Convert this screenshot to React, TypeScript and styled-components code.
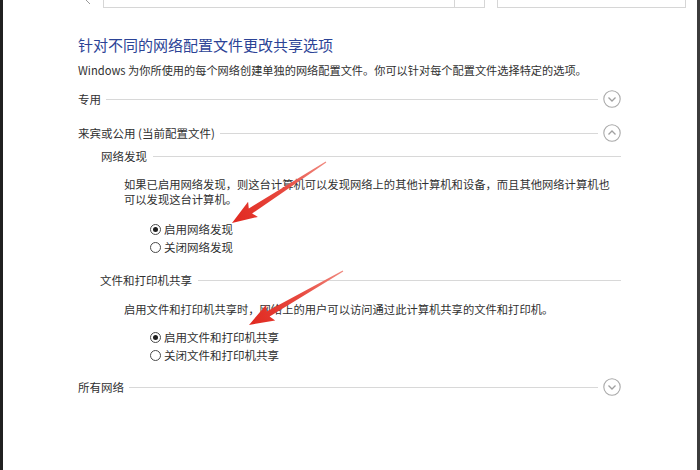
import styled, { createGlobalStyle } from 'styled-components'

const GlobalStyle = createGlobalStyle`
	html, body {
		margin: 0;
		padding: 0;
		background: #fff;
	}
	body {
		font-family: "Noto Sans CJK SC", "Noto Sans", sans-serif;
	}
`

const Frame = styled.div`
	position: relative;
	width: 700px;
	height: 470px;
	box-sizing: border-box;
	border-left: 3px solid #202020;
	border-right: 3px solid #3c3c3c;
	background: #fff;
	overflow: hidden;
	color: #303030;
	font-size: 11.5px;
`

const TopBar = styled.div`
	display: flex;
	align-items: flex-end;
	height: 8px;
	padding-left: 82px;
`

const Crumb = styled.svg`
	width: 6px;
	height: 8px;
	margin-right: 12px;
`

const AddressBox = styled.div`
	width: 352px;
	height: 8px;
	box-sizing: border-box;
	border: 1px solid #d6d6d6;
	border-top: none;
`

const DropButton = styled.div`
	width: 30px;
	height: 8px;
	box-sizing: border-box;
	border: 1px solid #d6d6d6;
	border-top: none;
	border-left: none;
`

const SearchBox = styled.div`
	margin-left: 12px;
	width: 189px;
	height: 8px;
	box-sizing: border-box;
	border: 1px solid #d6d6d6;
	border-top: none;
`

const Content = styled.div`
	display: flex;
	flex-direction: column;
	margin: 27px 0 0 75px;
	width: 543px;
`

const Heading = styled.h1`
	margin: 0;
	font-size: 15px;
	font-weight: normal;
	line-height: 20px;
	color: #2b4396;
	white-space: nowrap;
`

const Description = styled.p`
	margin: 7px 0 0;
	font-size: 11.2px;
	line-height: 16px;
	white-space: nowrap;
`

const ProfileRow = styled.div<{ $top: number }>`
	display: flex;
	align-items: center;
	gap: 5px;
	height: 18px;
	margin-top: ${(p) => p.$top}px;
`

const GroupRow = styled.div<{ $top: number; $indent: number }>`
	display: flex;
	align-items: center;
	gap: 6px;
	height: 16px;
	margin-top: ${(p) => p.$top}px;
	padding-left: ${(p) => p.$indent}px;
`

const Label = styled.span`
	white-space: nowrap;
	line-height: 16px;
`

const Rule = styled.div`
	flex: 1;
	height: 1px;
	background: #d8d8d8;
`

const ToggleIcon = styled.svg`
	width: 18px;
	height: 18px;
	flex: none;
`

const Note = styled.p<{ $top: number }>`
	margin: ${(p) => p.$top}px 0 0;
	padding-left: 46px;
	font-size: 11.3px;
	line-height: 15px;
`

const RadioList = styled.div<{ $top: number }>`
	display: flex;
	flex-direction: column;
	margin-top: ${(p) => p.$top}px;
	padding-left: 72px;
`

const RadioRow = styled.label`
	display: flex;
	align-items: center;
	gap: 3px;
	height: 18px;
	white-space: nowrap;
`

const RadioDot = styled.span<{ $checked?: boolean }>`
	position: relative;
	width: 11px;
	height: 11px;
	box-sizing: border-box;
	border: 1px solid #4a4a4a;
	border-radius: 50%;
	background: #fff;
	&::after {
		content: '';
		display: ${(p) => (p.$checked ? 'block' : 'none')};
		position: absolute;
		left: 2px;
		top: 2px;
		width: 5px;
		height: 5px;
		border-radius: 50%;
		background: #1f1f1f;
	}
`

const Overlay = styled.svg`
	position: absolute;
	left: -3px;
	top: 0;
	width: 700px;
	height: 470px;
	pointer-events: none;
`

const Toggle = ({ open }: { open?: boolean }) => (
	<ToggleIcon viewBox="0 0 18 18">
		<circle cx="9" cy="9" r="8.2" fill="none" stroke="#a9a9a9" strokeWidth="1.1" />
		<polyline
			points={open ? '5.5,10.5 9,7 12.5,10.5' : '5.5,7.5 9,11 12.5,7.5'}
			fill="none"
			stroke="#a0a0a0"
			strokeWidth="1.3"
		/>
	</ToggleIcon>
)

const Radio = ({ checked, children }: { checked?: boolean; children: string }) => (
	<RadioRow>
		<RadioDot $checked={checked} />
		{children}
	</RadioRow>
)

// tapered annotation arrow from tail to tip
const arrowPoints = (x1: number, y1: number, x2: number, y2: number) => {
	const dx = x2 - x1
	const dy = y2 - y1
	const len = Math.hypot(dx, dy)
	const ux = dx / len
	const uy = dy / len
	const nx = -uy
	const ny = ux
	const head = 22
	const wing = 9
	const neck = 3
	const tail = 0.6
	const bx = x2 - ux * head
	const by = y2 - uy * head
	const pts = [
		[x1 + nx * tail, y1 + ny * tail],
		[bx + nx * neck, by + ny * neck],
		[bx + ux * -3 + nx * wing, by + uy * -3 + ny * wing],
		[x2, y2],
		[bx + ux * -3 - nx * wing, by + uy * -3 - ny * wing],
		[bx - nx * neck, by - ny * neck],
		[x1 - nx * tail, y1 - ny * tail],
	]
	return pts.map((p) => p.map((v) => v.toFixed(1)).join(',')).join(' ')
}

const arrows = [
	{ id: 'a1', from: [326, 162], to: [232, 223] },
	{ id: 'a2', from: [343, 271], to: [249, 325] },
]

export default function App() {
	return (
		<>
			<GlobalStyle />
			<Frame>
				<TopBar>
					<Crumb viewBox="0 0 6 8">
						<polyline points="1,0 5,4" fill="none" stroke="#9a9a9a" strokeWidth="1" />
					</Crumb>
					<AddressBox />
					<DropButton />
					<SearchBox />
				</TopBar>
				<Content>
					<Heading>针对不同的网络配置文件更改共享选项</Heading>
					<Description>
						Windows 为你所使用的每个网络创建单独的网络配置文件。你可以针对每个配置文件选择特定的选项。
					</Description>

					<ProfileRow $top={12}>
						<Label>专用</Label>
						<Rule />
						<Toggle />
					</ProfileRow>

					<ProfileRow $top={16}>
						<Label>来宾或公用 (当前配置文件)</Label>
						<Rule />
						<Toggle open />
					</ProfileRow>

					<GroupRow $top={6} $indent={23}>
						<Label>网络发现</Label>
						<Rule />
					</GroupRow>
					<Note $top={13}>
						如果已启用网络发现，则这台计算机可以发现网络上的其他计算机和设备，而且其他网络计算机也
						<br />
						可以发现这台计算机。
					</Note>
					<RadioList $top={13}>
						<Radio checked>启用网络发现</Radio>
						<Radio>关闭网络发现</Radio>
					</RadioList>

					<GroupRow $top={16} $indent={22}>
						<Label>文件和打印机共享</Label>
						<Rule />
					</GroupRow>
					<Note $top={14}>
						启用文件和打印机共享时，网络上的用户可以访问通过此计算机共享的文件和打印机。
					</Note>
					<RadioList $top={11}>
						<Radio checked>启用文件和打印机共享</Radio>
						<Radio>关闭文件和打印机共享</Radio>
					</RadioList>

					<ProfileRow $top={14}>
						<Label>所有网络</Label>
						<Rule />
						<Toggle />
					</ProfileRow>
				</Content>

				<Overlay viewBox="0 0 700 470">
					<defs>
						{arrows.map((a) => (
							<linearGradient
								key={a.id}
								id={a.id}
								gradientUnits="userSpaceOnUse"
								x1={a.from[0]}
								y1={a.from[1]}
								x2={a.to[0]}
								y2={a.to[1]}
							>
								<stop offset="0" stopColor="#f08a80" />
								<stop offset="0.45" stopColor="#e84a40" />
								<stop offset="1" stopColor="#e0281f" />
							</linearGradient>
						))}
					</defs>
					{arrows.map((a) => (
						<polygon
							key={a.id}
							points={arrowPoints(a.from[0], a.from[1], a.to[0], a.to[1])}
							fill={`url(#${a.id})`}
						/>
					))}
				</Overlay>
			</Frame>
		</>
	)
}
